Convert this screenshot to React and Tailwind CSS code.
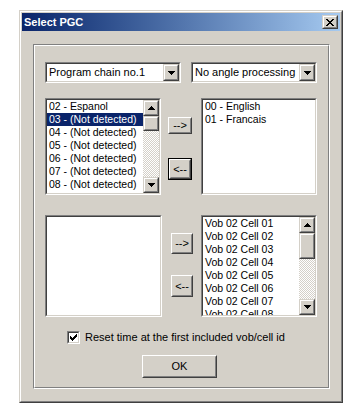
import React from "react";

function Sunken({ className = "", innerClass = "", children }) {
  return (
    <div className={`border border-t-[#808080] border-l-[#808080] border-r-white border-b-white ${className}`}>
      <div className={`h-full border border-t-[#404040] border-l-[#404040] border-r-[#d4d0c8] border-b-[#d4d0c8] ${innerClass}`}>
        {children}
      </div>
    </div>
  );
}

function ScrollBtn({ className = "", children }) {
  return (
    <div className={`shrink-0 border border-t-[#d4d0c8] border-l-[#d4d0c8] border-r-[#404040] border-b-[#404040] ${className}`}>
      <div className="h-full border border-t-white border-l-white border-r-[#808080] border-b-[#808080] bg-[#d4d0c8] flex items-center justify-center">
        {children}
      </div>
    </div>
  );
}

function PushBtn({ className = "", children }) {
  return (
    <div className={`border border-t-white border-l-white border-r-[#404040] border-b-[#404040] ${className}`}>
      <div className="h-full border border-t-[#d4d0c8] border-l-[#d4d0c8] border-r-[#808080] border-b-[#808080] bg-[#d4d0c8] flex items-center justify-center">
        {children}
      </div>
    </div>
  );
}

function UpArrow() {
  return (
    <svg width="7" height="4" shapeRendering="crispEdges">
      <rect x="3" y="0" width="1" height="1" fill="#000" />
      <rect x="2" y="1" width="3" height="1" fill="#000" />
      <rect x="1" y="2" width="5" height="1" fill="#000" />
      <rect x="0" y="3" width="7" height="1" fill="#000" />
    </svg>
  );
}

function DownArrow() {
  return (
    <svg width="7" height="4" shapeRendering="crispEdges">
      <rect x="0" y="0" width="7" height="1" fill="#000" />
      <rect x="1" y="1" width="5" height="1" fill="#000" />
      <rect x="2" y="2" width="3" height="1" fill="#000" />
      <rect x="3" y="3" width="1" height="1" fill="#000" />
    </svg>
  );
}

function CloseGlyph() {
  const rows = [
    [0, 1, 6, 7],
    [1, 2, 5, 6],
    [2, 3, 4, 5],
    [3, 4],
    [2, 3, 4, 5],
    [1, 2, 5, 6],
    [0, 1, 6, 7],
  ];
  return (
    <svg width="8" height="7" shapeRendering="crispEdges">
      {rows.map((r, y) =>
        r.map((x) => <rect key={`${x}-${y}`} x={x} y={y} width="1" height="1" fill="#000" />)
      )}
    </svg>
  );
}

function CheckGlyph() {
  const rows = [
    [6],
    [5, 6],
    [0, 4, 5, 6],
    [0, 1, 3, 4, 5],
    [0, 1, 2, 3, 4],
    [1, 2, 3],
    [2],
  ];
  return (
    <svg width="7" height="7" shapeRendering="crispEdges">
      {rows.map((r, y) =>
        r.map((x) => <rect key={`${x}-${y}`} x={x} y={y} width="1" height="1" fill="#000" />)
      )}
    </svg>
  );
}

function ScrollBar({ thumbTop, thumbHeight }) {
  return (
    <div className="w-[16px] h-full flex flex-col shrink-0">
      <ScrollBtn className="h-[16px]">
        <UpArrow />
      </ScrollBtn>
      <div className="flex-1 bg-[image:repeating-conic-gradient(#ffffff_0%_25%,#d4d0c8_0%_50%)] bg-size-[2px_2px]">
        <div style={{ marginTop: thumbTop }}>
          <ScrollBtn className="w-[16px]">
            <div style={{ height: thumbHeight - 4 }} />
          </ScrollBtn>
        </div>
      </div>
      <ScrollBtn className="h-[16px]">
        <DownArrow />
      </ScrollBtn>
    </div>
  );
}

function ListBox({ className, items = [], selected = -1, scroll }) {
  return (
    <Sunken className={className} innerClass="bg-white flex overflow-hidden">
      <div className="flex-1 overflow-hidden text-[10.5px]">
        {items.map((item, i) => (
          <div
            key={item}
            className={`h-[13px] leading-[13px] pl-[2px] whitespace-nowrap ${
              i === selected ? "bg-[#0a246a] text-white" : ""
            }`}
          >
            {item}
          </div>
        ))}
      </div>
      {scroll && <ScrollBar thumbTop={scroll.top} thumbHeight={scroll.height} />}
    </Sunken>
  );
}

function Combo({ className, text }) {
  return (
    <Sunken className={className} innerClass="bg-white flex items-center justify-between">
      <span className="pl-[2px] whitespace-nowrap">{text}</span>
      <ScrollBtn className="w-[16px] h-[17px]">
        <DownArrow />
      </ScrollBtn>
    </Sunken>
  );
}

const audioTracks = [
  "02 - Espanol",
  "03 - (Not detected)",
  "04 - (Not detected)",
  "05 - (Not detected)",
  "06 - (Not detected)",
  "07 - (Not detected)",
  "08 - (Not detected)",
  "09 - (Not detected)",
];

const cells = [
  "Vob 02 Cell 01",
  "Vob 02 Cell 02",
  "Vob 02 Cell 03",
  "Vob 02 Cell 04",
  "Vob 02 Cell 05",
  "Vob 02 Cell 06",
  "Vob 02 Cell 07",
  "Vob 02 Cell 08",
];

export default function App() {
  return (
    <div className="w-[360px] h-[412px] bg-white pt-[10px] pl-[19px] font-['Liberation_Sans',Arial,sans-serif] text-[11px] text-black">
      <div className="w-[324px] h-[393px] border border-t-[#d4d0c8] border-l-[#d4d0c8] border-r-[#404040] border-b-[#404040]">
        <div className="h-full border border-t-white border-l-white border-r-[#808080] border-b-[#808080] bg-[#d4d0c8] p-px">

          <div className="h-[18px] flex items-center justify-between bg-linear-to-r from-[#0a246a] to-[#a6caf0] px-[2px]">
            <span className="font-bold text-white">Select PGC</span>
            <ScrollBtn className="w-[16px] h-[14px]">
              <CloseGlyph />
            </ScrollBtn>
          </div>

          <div className="mt-[13px] ml-[11px] w-[297px] h-[345px] border border-t-[#808080] border-l-[#808080] border-r-white border-b-white">
            <div className="h-full border border-t-white border-l-white border-r-[#808080] border-b-[#808080] pl-[10px] pt-[16px]">

              <div className="flex gap-[10px]">
                <Combo className="w-[136px] h-[21px]" text="Program chain no.1" />
                <Combo className="w-[126px] h-[21px]" text="No angle processing" />
              </div>

              <div className="flex mt-[15px]">
                <ListBox
                  className="w-[116px] h-[97px]"
                  items={audioTracks}
                  selected={1}
                  scroll={{ top: 0, height: 15 }}
                />
                <div className="ml-[7px] w-[24px]">
                  <PushBtn className="mt-[19px] h-[17px]">--&gt;</PushBtn>
                  <div className="mt-[24px] border border-black h-[22px]">
                    <PushBtn className="h-full">&lt;--</PushBtn>
                  </div>
                </div>
                <ListBox
                  className="ml-[9px] w-[116px] h-[97px]"
                  items={["00 - English", "01 - Francais"]}
                />
              </div>

              <div className="flex mt-[20px]">
                <ListBox className="w-[117px] h-[102px]" />
                <div className="ml-[9px] w-[22px]">
                  <PushBtn className="mt-[18px] h-[21px]">--&gt;</PushBtn>
                  <PushBtn className="mt-[21px] h-[22px]">&lt;--</PushBtn>
                </div>
                <ListBox
                  className="ml-[8px] w-[116px] h-[102px]"
                  items={cells}
                  scroll={{ top: 0, height: 26 }}
                />
              </div>

              <div className="flex items-center mt-[14px] pl-[22px] h-[13px]">
                <Sunken className="w-[13px] h-[13px]" innerClass="bg-white flex items-center justify-center">
                  <CheckGlyph />
                </Sunken>
                <span className="ml-[5px] whitespace-nowrap">Reset time at the first included vob/cell id</span>
              </div>

              <PushBtn className="mt-[11px] ml-[97px] w-[75px] h-[23px]">OK</PushBtn>

            </div>
          </div>

        </div>
      </div>
    </div>
  );
}
